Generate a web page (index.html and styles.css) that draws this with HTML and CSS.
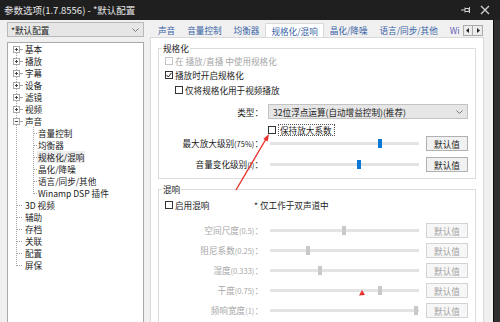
FILE: index.html
```html
<!DOCTYPE html>
<html>
<head>
  <link rel="stylesheet" href="styles.css">
</head>
<body>
  <div class="titlebar">
    <span>参数选项(1.7.8556) - *默认配置</span>
    <span class="tools">
      <svg width="10" height="8" viewBox="0 0 10 8"><path d="M0 4h4M4 1.5v5M4 2.5h4v3H4M8.5 1v6" stroke="#cfcfcf" fill="none"/></svg>
      <svg width="10" height="10" viewBox="0 0 10 10"><path d="M1 1l8 8M9 1l-8 8" stroke="#cfcfcf" stroke-width="1.3"/></svg>
    </span>
  </div>

  <div class="main">
    <div class="body">
      <div class="sidebar">
        <div class="select">
          <span>*默认配置</span>
          <svg width="7" height="4" viewBox="0 0 7 4"><path d="M0.5 0.5l3 3 3-3" stroke="#777" fill="none"/></svg>
        </div>
        <div class="tree">
          <ul>
            <li class="row"><span class="exp"></span><span class="tw short"></span><span class="txt">基本</span></li>
            <li class="row"><span class="exp"></span><span class="tw short"></span><span class="txt">播放</span></li>
            <li class="row"><span class="exp"></span><span class="tw short"></span><span class="txt">字幕</span></li>
            <li class="row"><span class="exp"></span><span class="tw short"></span><span class="txt">设备</span></li>
            <li class="row"><span class="exp"></span><span class="tw short"></span><span class="txt">滤镜</span></li>
            <li class="row"><span class="exp"></span><span class="tw short"></span><span class="txt">视频</span></li>
            <li>
              <div class="row"><span class="exp open"></span><span class="tw short"></span><span class="txt">声音</span></div>
              <ul class="sub">
                <li class="row"><span class="tw"></span><span class="txt">音量控制</span></li>
                <li class="row"><span class="tw"></span><span class="txt">均衡器</span></li>
                <li class="row"><span class="tw"></span><span class="txt sel">规格化/混响</span></li>
                <li class="row"><span class="tw"></span><span class="txt">晶化/降噪</span></li>
                <li class="row"><span class="tw"></span><span class="txt">语言/同步/其他</span></li>
                <li class="row"><span class="tw"></span><span class="txt">Winamp DSP 插件</span></li>
              </ul>
            </li>
            <li class="row"><span class="tw"></span><span class="txt">3D 视频</span></li>
            <li class="row"><span class="tw"></span><span class="txt">辅助</span></li>
            <li class="row"><span class="tw"></span><span class="txt">存档</span></li>
            <li class="row"><span class="tw"></span><span class="txt">关联</span></li>
            <li class="row"><span class="tw"></span><span class="txt">配置</span></li>
            <li class="row"><span class="tw"></span><span class="txt">屏保</span></li>
          </ul>
        </div>
      </div>

      <div class="content">
        <div class="tabs">
          <div class="tablist">
            <span class="tab">声音</span>
            <span class="tab">音量控制</span>
            <span class="tab">均衡器</span>
            <span class="tab active">规格化/混响</span>
            <span class="tab">晶化/降噪</span>
            <span class="tab">语言/同步/其他</span>
            <span class="tab wide">Wi</span>
          </div>
          <div class="arrows">
            <span class="arrow"><svg width="4" height="5" viewBox="0 0 4 5"><path d="M3 0v5L0 2.5z" fill="#222"/></svg></span>
            <span class="arrow"><svg width="4" height="5" viewBox="0 0 4 5"><path d="M1 0v5l3-2.5z" fill="#222"/></svg></span>
          </div>
        </div>

        <div class="panel">
          <fieldset class="group norm">
            <legend>规格化</legend>
            <div class="check dis"><span class="box"></span>在 播放/直播 中使用规格化</div>
            <div class="check"><span class="box on"><svg width="6" height="6" viewBox="0 0 6 6"><path d="M0.5 3l1.8 2L5.5 0.8" stroke="#222" fill="none"/></svg></span>播放时开启规格化</div>
            <div class="check indent"><span class="box"></span>仅将规格化用于视频播放</div>

            <div class="frow type">
              <span class="label">类型：</span>
              <div class="combo">
                <span>32位浮点运算(自动增益控制)(推荐)</span>
                <svg width="7" height="4" viewBox="0 0 7 4"><path d="M0.5 0.5l3 3 3-3" stroke="#777" fill="none"/></svg>
              </div>
            </div>
            <div class="frow keep">
              <span></span>
              <div class="check"><span class="box"></span><span class="focus">保持放大系数</span></div>
            </div>
            <div class="frow">
              <span class="label">最大放大级别<small>(75%)</small>：</span>
              <div class="slider"><div class="track"><span class="thumb" style="left: 108px;"></span></div></div>
              <span class="btn">默认值</span>
            </div>
            <div class="frow gap">
              <span class="label">音量变化级别<small>(l)</small>：</span>
              <div class="slider"><div class="track"><span class="thumb" style="left: 87px;"></span></div></div>
              <span class="btn">默认值</span>
            </div>
          </fieldset>

          <fieldset class="group reverb">
            <legend>混响</legend>
            <div class="enable">
              <div class="check"><span class="box"></span>启用混响</div>
              <span>* 仅工作于双声道中</span>
            </div>
            <div class="sliders dis">
              <div class="frow">
                <span class="label">空间尺度<small>(0.5)</small>：</span>
                <div class="slider"><div class="track"><span class="thumb" style="left: 72px;"></span></div></div>
                <span class="btn">默认值</span>
              </div>
              <div class="frow">
                <span class="label">阻尼系数<small>(0.25)</small>：</span>
                <div class="slider"><div class="track"><span class="thumb" style="left: 36px;"></span></div></div>
                <span class="btn">默认值</span>
              </div>
              <div class="frow">
                <span class="label">湿度<small>(0.333)</small>：</span>
                <div class="slider"><div class="track"><span class="thumb" style="left: 48px;"></span></div></div>
                <span class="btn">默认值</span>
              </div>
              <div class="frow">
                <span class="label">干度<small>(0.75)</small>：</span>
                <div class="slider"><div class="track"><span class="thumb" style="left: 108px;"></span></div></div>
                <span class="btn">默认值</span>
              </div>
              <div class="frow">
                <span class="label">频响宽度<small>(1)</small>：</span>
                <div class="slider"><div class="track"><span class="thumb" style="left: 144px;"></span></div></div>
                <span class="btn">默认值</span>
              </div>
            </div>
          </fieldset>
        </div>
      </div>
    </div>
    <div class="strip"></div>
  </div>

  <svg class="annot" width="500" height="322" viewBox="0 0 500 322">
    <path d="M236 190L266 139" stroke="#e8302a" stroke-width="1.4"/>
    <path d="M269 134L267.7 141.6L263.3 139z" fill="#e8302a"/>
    <path d="M362 290L359 295.5L365 295z" fill="#e8302a"/>
  </svg>
</body>
</html>
```

FILE: styles.css
```css
* {
  box-sizing: border-box;
}

body {
  margin: 0;
  width: 500px;
  height: 322px;
  overflow: hidden;
  font-family: "Noto Sans CJK SC", "Noto Sans", sans-serif;
  font-size: 8.6px;
  line-height: 12px;
  color: #1c1c1c;
  background-color: #2a2a2a;
}

.titlebar {
  height: 20px;
  background-color: #1f1f1f;
  color: #e8e8e8;
  font-size: 9.5px;
  display: flex;
  align-items: center;
  justify-content: space-between;
  padding: 0 10px 0 4px;
}

.tools {
  display: flex;
  align-items: center;
  gap: 9px;
}

.main {
  display: flex;
  height: 302px;
}

.body {
  width: 493px;
  background-color: #f0f0f0;
  display: flex;
  gap: 6px;
  padding: 2px 0 0 7px;
}

.strip {
  flex: 1;
  background-color: #2f2f2f;
  border-left: 1px solid #0c0c0c;
}

/* left side */

.sidebar {
  width: 137px;
  display: flex;
  flex-direction: column;
  gap: 5px;
}

.select {
  height: 15px;
  border: 1px solid #b9b9b9;
  background-color: #e6e6e6;
  display: flex;
  align-items: center;
  justify-content: space-between;
  padding: 0 4px 0 3px;
}

.tree {
  flex: 1;
  background-color: #fff;
  border: 1px solid #a9a9a9;
  border-bottom: none;
  padding-left: 8px;
}

.tree ul {
  list-style: none;
  margin: 0;
  padding: 0;
  background: repeating-linear-gradient(to bottom, #a5a5a5 0 1px, transparent 1px 2px) no-repeat;
  background-size: 1px calc(100% - 12px);
  background-position: 0 6px;
}

.tree ul.sub {
  margin-left: 17px;
  background-size: 1px calc(100% - 6px);
  background-position: 0 0;
}

.row {
  height: 12px;
  display: flex;
  align-items: center;
  white-space: nowrap;
}

.tw {
  width: 6px;
  border-top: 1px dotted #a5a5a5;
}

.tw.short {
  width: 2px;
}

.sub .tw {
  width: 4px;
}

.txt {
  margin-left: 2px;
  padding: 0 1px;
}

.sub .txt {
  margin-left: 0;
}

.txt.sel {
  background-color: #ececec;
}

.exp {
  width: 7px;
  height: 7px;
  margin-left: -3px;
  border: 1px solid #a8a8a8;
  background: linear-gradient(#444, #444) center / 3px 1px no-repeat,
    linear-gradient(#444, #444) center / 1px 3px no-repeat,
    #fff;
}

.exp.open {
  background: linear-gradient(#444, #444) center / 3px 1px no-repeat, #fff;
}

/* right side */

.content {
  width: 334px;
  display: flex;
  flex-direction: column;
}

.tabs {
  height: 15px;
  display: flex;
}

.tablist {
  width: 311px;
  margin-left: 2px;
  display: flex;
  overflow: hidden;
}

.tab {
  flex: none;
  padding: 0 6px;
  margin-top: 1px;
  line-height: 14px;
  color: #3a64a6;
  white-space: nowrap;
}

.tab.active {
  position: relative;
  z-index: 1;
  padding: 0 5px;
  margin-bottom: -1px;
  background-color: #fff;
  border: 1px solid #d9d9d9;
  border-bottom: none;
}

.tab.wide {
  color: #6a5fb5;
  padding-right: 0;
}

.arrows {
  display: flex;
  margin-top: 3px;
  height: 11px;
}

.arrow {
  width: 10px;
  border: 1px solid #ababab;
  background-color: #ececec;
  display: flex;
  align-items: center;
  justify-content: center;
}

.arrow + .arrow {
  border-left: none;
}

.panel {
  flex: 1;
  background-color: #fff;
  border: 1px solid #d9d9d9;
  padding: 4px 7px 0 7px;
}

.group {
  margin: 0;
  min-width: 0;
  border: 1px solid #dcdcdc;
  padding: 0 6px 6px 6px;
}

.group legend {
  margin-left: -3px;
  padding: 0 1px;
  line-height: 12px;
}

.reverb {
  margin-top: 4px;
}

.check {
  height: 14px;
  display: flex;
  align-items: center;
  gap: 2px;
  white-space: nowrap;
}

.check.indent {
  margin: 1px 0 0 10px;
}

.box {
  flex: none;
  width: 8px;
  height: 8px;
  border: 1px solid #333;
  background-color: #fff;
  display: flex;
  align-items: center;
  justify-content: center;
}

.dis {
  color: #a7a7a7;
}

.check.dis .box {
  border-color: #c6c6c6;
}

.focus {
  border: 1px dotted #555;
  padding: 0 2px 0 1px;
  line-height: 10px;
}

.frow {
  height: 15px;
  display: grid;
  grid-template-columns: 98px 152px 43px;
  column-gap: 5px;
  align-items: center;
}

.frow .btn {
  margin-left: 1px;
}

.frow.type {
  margin-top: 7px;
}

.frow.keep {
  height: 12px;
  margin-top: 5px;
}

.frow.keep .check {
  height: 12px;
}

.frow.gap {
  margin-top: 6px;
}

.label {
  text-align: right;
  white-space: nowrap;
}

.label small {
  font-size: 7.5px;
}

.combo {
  grid-column: 2 / 4;
  height: 15px;
  border: 1px solid #c3c3c3;
  background-color: #e6e6e6;
  display: flex;
  align-items: center;
  justify-content: space-between;
  padding: 0 4px;
  white-space: nowrap;
}

.slider {
  display: flex;
  align-items: center;
}

.track {
  position: relative;
  width: 149px;
  height: 3px;
  margin-left: 2px;
  background-color: #e3e3e3;
}

.thumb {
  position: absolute;
  top: -3px;
  width: 4px;
  height: 9px;
  background-color: #0a78d6;
}

.dis .thumb {
  background-color: #c9c9c9;
}

.btn {
  height: 15px;
  border: 1px solid #b0b0b0;
  background-color: #f1f1f1;
  display: flex;
  align-items: center;
  justify-content: center;
}

.dis .btn {
  border-color: #d3d3d3;
  background-color: #f7f7f7;
  color: #a2a2a2;
}

.enable {
  height: 12px;
  margin-top: 4px;
  display: flex;
  align-items: center;
}

.enable .check {
  width: 89px;
  height: 12px;
}

.sliders {
  margin-top: 12px;
  display: flex;
  flex-direction: column;
  gap: 5px;
}

.annot {
  position: absolute;
  top: 0;
  left: 0;
  pointer-events: none;
}
```
